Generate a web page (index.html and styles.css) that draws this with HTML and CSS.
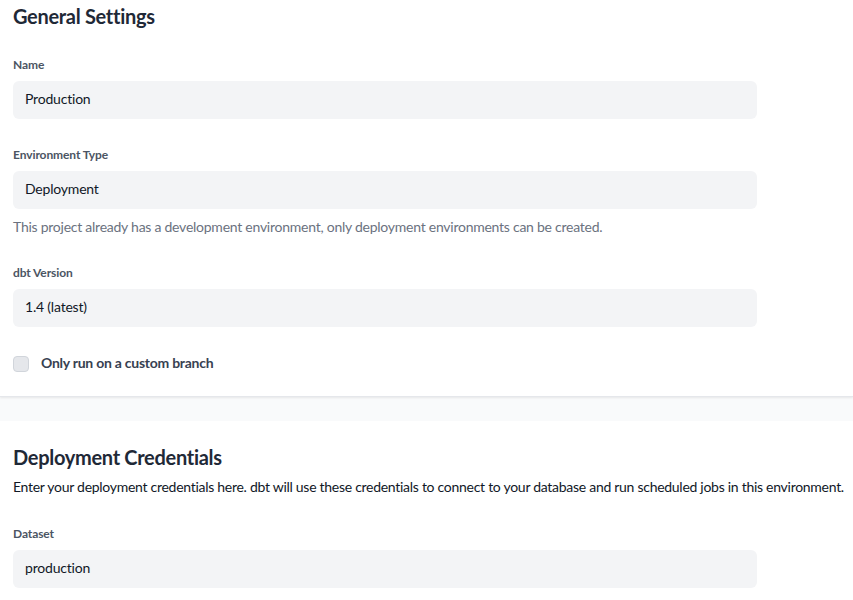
FILE: index.html
```html
<!DOCTYPE html>
<html>
<head>
<meta charset="utf-8">
<link rel="stylesheet" href="styles.css">
</head>
<body>
<section class="card card-general">
  <h2 class="title">General Settings</h2>
  <div class="field">
    <label class="label">Name</label>
    <div class="input">Production</div>
  </div>
  <div class="field">
    <label class="label">Environment Type</label>
    <div class="input">Deployment</div>
    <p class="help">This project already has a development environment, only deployment environments can be created.</p>
  </div>
  <div class="field">
    <label class="label">dbt Version</label>
    <div class="input">1.4 (latest)</div>
  </div>
  <div class="check">
    <span class="box"></span>
    <span class="check-label">Only run on a custom branch</span>
  </div>
</section>
<section class="card card-creds">
  <h2 class="title">Deployment Credentials</h2>
  <p class="desc">Enter your deployment credentials here. dbt will use these credentials to connect to your database and run scheduled jobs in this environment.</p>
  <div class="field">
    <label class="label">Dataset</label>
    <div class="input">production</div>
  </div>
</section>
</body>
</html>
```
FILE: styles.css
```css
html, body {
  margin: 0;
  padding: 0;
}
body {
  background: #f9fafb;
  font-family: "Lato", "Liberation Sans", sans-serif;
  color: #111827;
  width: 853px;
  height: 600px;
  overflow: hidden;
}
.card {
  background: #ffffff;
  padding: 0 13px;
  display: flex;
  flex-direction: column;
  box-sizing: border-box;
}
.card-general {
  padding-top: 2px;
  height: 397px;
  box-shadow: 0 1px 2px rgba(0, 0, 0, 0.08);
  border-bottom: 1px solid #e5e7eb;
  gap: 28px;
}
.card-creds {
  margin-top: 24px;
  padding-top: 22px;
  height: 179px;
}
.title {
  margin: 0 0 -1px 0;
  font-size: 20px;
  line-height: 28px;
  font-weight: 700;
  letter-spacing: -0.3px;
  color: #1f2937;
}
.field {
  display: flex;
  flex-direction: column;
  width: 744px;
}
.label {
  font-size: 12px;
  line-height: 16px;
  font-weight: 700;
  color: #4b5563;
  margin-bottom: 8px;
  letter-spacing: -0.1px;
}
.input {
  background: #f3f4f6;
  border-radius: 6px;
  height: 38px;
  box-sizing: border-box;
  padding: 0 12px 3px 12px;
  display: flex;
  align-items: center;
  font-size: 14px;
  letter-spacing: -0.2px;
  color: #111827;
}
.help {
  margin: 8px 0 0 0;
  font-size: 14px;
  line-height: 20px;
  letter-spacing: -0.25px;
  color: #6b7280;
}
.check {
  display: flex;
  align-items: center;
  gap: 12px;
  height: 18px;
}
.box {
  width: 14px;
  height: 14px;
  border: 1px solid #d1d5db;
  background: #e5e7eb;
  border-radius: 4px;
}
.check-label {
  font-size: 14px;
  font-weight: 700;
  color: #374151;
  line-height: 16px;
  letter-spacing: -0.25px;
  padding-bottom: 2px;
}
.desc {
  margin: 7px 0 29px 0;
  font-size: 14px;
  line-height: 20px;
  letter-spacing: -0.28px;
  white-space: nowrap;
  color: #111827;
}
```
